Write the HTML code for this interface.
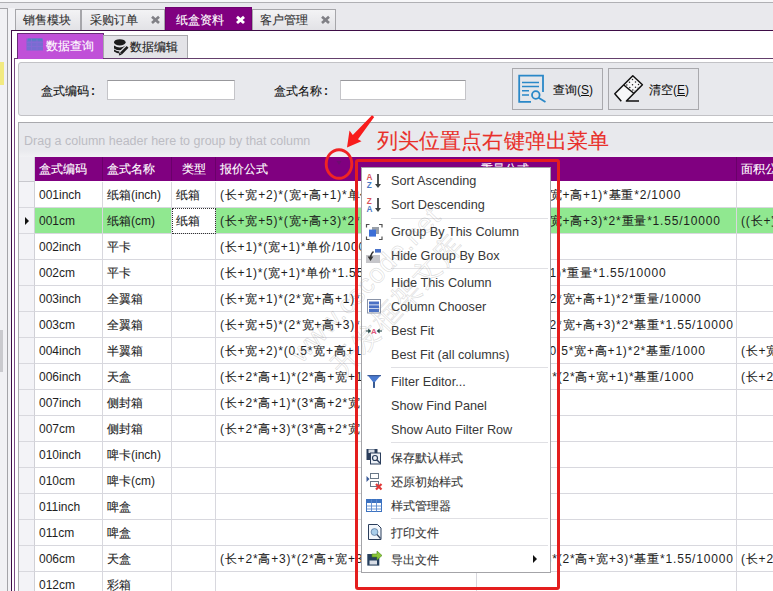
<!DOCTYPE html>
<html><head><meta charset="utf-8">
<style>
*{box-sizing:border-box}
html,body{margin:0;padding:0}
body{width:773px;height:591px;overflow:hidden;position:relative;background:#e9e9ed;font-family:"Liberation Sans",sans-serif;font-size:12px;color:#222}
.a{position:absolute}
.topline{left:0;top:0;width:773px;height:2px;background:#f7f7f9}
.topline2{left:0;top:2px;width:773px;height:1px;background:#b0b0b4}
.side{left:0;top:8px;width:8px;height:600px;background:#f1f1f4;border-top:1px solid #a4a4a8;border-right:1px solid #a4a4a8}
.gap{left:8px;top:8px;width:7px;height:600px;background:#f2f2f5}
.dtab{top:9px;height:21px;border:1px solid #a6a6aa;border-bottom:none;background:linear-gradient(#f3f3f5,#e2e2e6);color:#333;font-size:12px;line-height:19px}
.dtab .t{position:absolute;top:1px}
.dtab .x{position:absolute;top:0;font-weight:bold;color:#7c7c80;font-size:13px}
.dtab.act{top:7px;height:23px;background:#800080;border-color:#700070;color:#fff;line-height:23px}
.dtab.act .x{color:#fff}
.frame{left:11px;top:30px;width:800px;height:600px;border-left:1px solid #3e0c46;border-top:1px solid #3e0c46;background:#fff}
.itab{top:33px;height:26px;font-size:12px;line-height:24px}
.itab.act{left:17px;width:87px;background:#c050d8;border:1px solid #6a2a7a;border-bottom:none;color:#fff}
.itab.in{left:103px;top:35px;height:23px;width:85px;background:#e3e3e7;border:1px solid #a8a8ac;border-bottom:none;color:#222;line-height:22px}
.ipage{left:14px;top:58px;width:800px;height:600px;border-left:1px solid #7a4a84;border-top:1px solid #64406c;background:#fff}
.qpanel{left:18px;top:62px;width:800px;height:54px;background:#e8e9ed;border:1px solid #c2c2c6;border-radius:3px}
.lbl{top:83px;font-size:12px;color:#111;line-height:16px}
.inp{top:80px;height:20px;background:#fff;border:1px solid #c4c4c8;border-top-color:#98989c}
.btn{top:68px;height:42px;width:91px;border:1px solid #a9a9ad;background:#e6e7eb}
.btn .t{position:absolute;top:13px;font-size:12px;line-height:16px;color:#111}
.grid{left:18px;top:122px;width:800px;height:600px;border:1px solid #a9a9ad;background:#fff}
.gpanel{left:19px;top:123px;width:800px;height:34px;background:linear-gradient(#e8e9ed 0,#e8e9ed 78%,#f1f1f4 100%)}
.gtext{left:24px;top:134px;color:#bcbcc3;font-size:12.5px;line-height:14px}
.hdr{left:35px;top:157px;width:800px;height:24px;background:#800080}
.hind{left:19px;top:157px;width:16px;height:25px;background:#eeeef2;border-right:1px solid #d0d0d6;border-bottom:1px solid #c8c8ce}
.hc{position:absolute;top:157px;height:24px;color:#fff;line-height:24px;padding-left:4px;border-right:1px solid #6a006a;white-space:nowrap;overflow:hidden}
.row{position:absolute;left:19px;width:800px;height:26px}
.row .c{position:absolute;top:0;height:26px;line-height:27px;padding-left:4px;white-space:nowrap;overflow:hidden;border-right:1px solid #d8d8de;border-bottom:1px solid #d8d8de;color:#1e1e1e}
.row .c{margin-left:-19px}
.row.sel .c{background:#90e890}
.row .f{letter-spacing:0.8px}
.row.sel .c.focus{background:#fff;outline:1px dotted #333;outline-offset:-1px}
.ind{position:absolute;left:0;top:0;width:16px;height:26px;background:#f3f3f7;border-right:1px solid #d0d0d6;border-bottom:1px solid #d8d8de}
.tri{position:absolute;left:6px;top:9px;width:0;height:0;border-left:4px solid #111;border-top:4px solid transparent;border-bottom:4px solid transparent}
.menu{left:361px;top:167px;width:190px;height:406px;background:#fff;border:1px solid #a4a4a8}
.mi{position:absolute;left:391px;font-size:12.7px;line-height:14px;color:#383838;white-space:nowrap}
.sep{position:absolute;left:391px;width:157px;height:1px;background:#e0e0e4}
.red{left:355px;top:159px;width:205px;height:431px;border:3px solid #e41e1e;border-radius:3px}
.ann{left:377px;top:129px;color:#e8302a;font-size:21px;line-height:24px;letter-spacing:0.1px;white-space:nowrap}
.z{-webkit-text-stroke:0.12px currentColor}
.wm .z{-webkit-text-stroke:0.7px rgba(150,150,150,0.33)}
</style></head>
<body>
<div class="a topline"></div>
<div class="a topline2"></div>
<div class="a side"></div>
<div class="a" style="left:0;top:62px;width:4px;height:23px;background:#f2ea80"></div>
<div class="a" style="left:0;top:330px;width:3px;height:42px;background:#cacace"></div>
<div class="a gap"></div>

<div class="a frame"></div>

<div class="a dtab" style="left:15px;width:66px"><span class="t" style="left:7px"><span class="z">销售模块</span></span></div>
<div class="a dtab" style="left:81px;width:84px"><span class="t" style="left:8px"><span class="z">采购订单</span></span></div>
<div class="a dtab" style="left:252px;width:84px"><span class="t" style="left:7px"><span class="z">客户管理</span></span></div>
<div class="a dtab act" style="left:165px;width:87px"><span class="t" style="left:10px"><span class="z">纸盒资料</span></span></div>

<div class="a ipage"></div>
<div class="a itab act"><span class="a" style="left:28px;top:0"><span class="z">数据查询</span></span></div>
<div class="a itab in"><span class="a" style="left:26px;top:0"><span class="z">数据编辑</span></span></div>

<svg class="a" style="left:0;top:0" width="773" height="60" viewBox="0 0 773 60">
<g stroke-width="2.2" stroke-linecap="butt">
<path d="M152,16.8 L159,23 M159,16.8 L152,23" stroke="#808086" stroke-width="2.7"/>
<path d="M322,16.8 L329,23 M329,16.8 L322,23" stroke="#808086" stroke-width="2.7"/>
<path d="M237,16.8 L244,23 M244,16.8 L237,23" stroke="#fff" stroke-width="2.9"/>
</g>
<!-- grid icon -->
<rect x="26.5" y="38.5" width="16.5" height="12" fill="#6a72d0" opacity="0.85"/>
<rect x="28" y="38.5" width="14" height="2" fill="#3a90b8" opacity="0.7"/>
<path d="M26.5,42.5 H43 M26.5,46.5 H43 M31.5,38.5 V51 M37,38.5 V51" stroke="#8a6ad8" stroke-width="1" opacity="0.7"/>
<!-- db icon -->
<ellipse cx="119.8" cy="42.3" rx="5.8" ry="3.1" fill="#1c1c1c"/>
<path d="M114,45.6 Q119.8,49.4 125.6,45.6 V48.4 Q119.8,52.2 114,48.4 Z" fill="#1c1c1c"/>
<path d="M114,49.6 Q119.8,53.4 125.6,49.6 V51.6 Q119.8,55.4 114,51.6 Z" fill="#1c1c1c"/>
<path d="M128,46.5 L120.6,53.9" stroke="#e3e3e7" stroke-width="5.2"/>
<path d="M127.6,46.9 L121,53.5" stroke="#1c1c1c" stroke-width="2.6"/>
<path d="M118.8,55.6 L119.6,52.6 L121.8,54.8 Z" fill="#1c1c1c"/>
</svg>
<div class="a qpanel"></div>
<div class="a lbl" style="left:41px"><span class="z">盒式编码</span><span style="margin-left:2px;font-weight:bold">:</span></div>
<div class="a inp" style="left:107px;width:128px"></div>
<div class="a lbl" style="left:274px"><span class="z">盒式名称</span><span style="margin-left:2px;font-weight:bold">:</span></div>
<div class="a inp" style="left:340px;width:126px"></div>
<div class="a btn" style="left:512px"><span class="t" style="left:40px"><span class="z">查询</span>(<u>S</u>)</span></div>
<div class="a btn" style="left:608px"><span class="t" style="left:40px"><span class="z">清空</span>(<u>E</u>)</span></div>

<div class="a grid"></div>
<div class="a gpanel"></div>
<div class="a gtext">Drag a column header here to group by that column</div>
<div class="a hind"></div>
<div class="a hdr"></div>
<div class="hc" style="left:35px;width:68px"><span class="z">盒式编码</span></div>
<div class="hc" style="left:103px;width:69px"><span class="z">盒式名称</span></div>
<div class="hc" style="left:172px;width:44px;text-align:center;padding-left:0"><span class="z">类型</span></div>
<div class="hc" style="left:216px;width:261px;border-right:none"><span class="z">报价公式</span></div>
<div class="hc" style="left:477px;width:260px"><span class="z">重量公式</span></div>
<div class="hc" style="left:737px;width:100px"><span class="z">面积公式</span></div>

<div class="row" style="top:182px"><div class="ind"></div><div class="c" style="left:35px;width:68px">001inch</div><div class="c" style="left:103px;width:69px"><span class="z">纸箱</span>(inch)</div><div class="c" style="left:172px;width:44px"><span class="z">纸箱</span></div><div class="c f" style="left:216px;width:261px">(<span class="z">长</span>+<span class="z">宽</span>+2)*(<span class="z">宽</span>+<span class="z">高</span>+1)*<span class="z">单价</span>*2/1000</div><div class="c f" style="left:477px;width:260px">(<span class="z">长</span>+<span class="z">宽</span>+2)*(<span class="z">宽</span>+<span class="z">高</span>+1)*<span class="z">基重</span>*2/1000</div><div class="c f" style="left:737px;width:163px"></div></div>
<div class="row sel" style="top:208px"><div class="ind"><span class="tri"></span></div><div class="c" style="left:35px;width:68px">001cm</div><div class="c" style="left:103px;width:69px"><span class="z">纸箱</span>(cm)</div><div class="c focus" style="left:172px;width:44px"><span class="z">纸箱</span></div><div class="c f" style="left:216px;width:261px">(<span class="z">长</span>+<span class="z">宽</span>+5)*(<span class="z">宽</span>+<span class="z">高</span>+3)*2*<span class="z">单价</span>*1.55/10000</div><div class="c f" style="left:477px;width:260px">(<span class="z">长</span>+<span class="z">宽</span>+5)*(<span class="z">宽</span>+<span class="z">高</span>+3)*2*<span class="z">重量</span>*1.55/10000</div><div class="c f" style="left:737px;width:163px">((<span class="z">长</span>+<span class="z">宽</span>)*2</div></div>
<div class="row" style="top:234px"><div class="ind"></div><div class="c" style="left:35px;width:68px">002inch</div><div class="c" style="left:103px;width:69px"><span class="z">平卡</span></div><div class="c" style="left:172px;width:44px"></div><div class="c f" style="left:216px;width:261px">(<span class="z">长</span>+1)*(<span class="z">宽</span>+1)*<span class="z">单价</span>/1000</div><div class="c f" style="left:477px;width:260px"></div><div class="c f" style="left:737px;width:163px"></div></div>
<div class="row" style="top:260px"><div class="ind"></div><div class="c" style="left:35px;width:68px">002cm</div><div class="c" style="left:103px;width:69px"><span class="z">平卡</span></div><div class="c" style="left:172px;width:44px"></div><div class="c f" style="left:216px;width:261px">(<span class="z">长</span>+1)*(<span class="z">宽</span>+1)*<span class="z">单价</span>*1.55/10000</div><div class="c f" style="left:477px;width:260px">(<span class="z">长</span>+1)*(<span class="z">宽</span>+1)*<span class="z">重量</span>*1.55/10000</div><div class="c f" style="left:737px;width:163px"></div></div>
<div class="row" style="top:286px"><div class="ind"></div><div class="c" style="left:35px;width:68px">003inch</div><div class="c" style="left:103px;width:69px"><span class="z">全翼箱</span></div><div class="c" style="left:172px;width:44px"></div><div class="c f" style="left:216px;width:261px">(<span class="z">长</span>+<span class="z">宽</span>+1)*(2*<span class="z">宽</span>+<span class="z">高</span>+1)*2*<span class="z">单价</span>/1000</div><div class="c f" style="left:477px;width:260px">(<span class="z">长</span>+<span class="z">宽</span>+1)*(2*<span class="z">宽</span>+<span class="z">高</span>+1)*2*<span class="z">重量</span>/10000</div><div class="c f" style="left:737px;width:163px"></div></div>
<div class="row" style="top:312px"><div class="ind"></div><div class="c" style="left:35px;width:68px">003cm</div><div class="c" style="left:103px;width:69px"><span class="z">全翼箱</span></div><div class="c" style="left:172px;width:44px"></div><div class="c f" style="left:216px;width:261px">(<span class="z">长</span>+<span class="z">宽</span>+5)*(2*<span class="z">宽</span>+<span class="z">高</span>+3)*2*<span class="z">单价</span>/1000</div><div class="c f" style="left:477px;width:260px">(<span class="z">长</span>+<span class="z">宽</span>+5)*(2*<span class="z">宽</span>+<span class="z">高</span>+3)*2*<span class="z">基重</span>*1.55/10000</div><div class="c f" style="left:737px;width:163px"></div></div>
<div class="row" style="top:338px"><div class="ind"></div><div class="c" style="left:35px;width:68px">004inch</div><div class="c" style="left:103px;width:69px"><span class="z">半翼箱</span></div><div class="c" style="left:172px;width:44px"></div><div class="c f" style="left:216px;width:261px">(<span class="z">长</span>+<span class="z">宽</span>+2)*(0.5*<span class="z">宽</span>+<span class="z">高</span>+1)*2*<span class="z">单价</span></div><div class="c f" style="left:477px;width:260px">(<span class="z">长</span>+<span class="z">宽</span>+2)*(0.5*<span class="z">宽</span>+<span class="z">高</span>+1)*2*<span class="z">基重</span>/1000</div><div class="c f" style="left:737px;width:163px">(<span class="z">长</span>+<span class="z">宽</span></div></div>
<div class="row" style="top:364px"><div class="ind"></div><div class="c" style="left:35px;width:68px">006inch</div><div class="c" style="left:103px;width:69px"><span class="z">天盒</span></div><div class="c" style="left:172px;width:44px"></div><div class="c f" style="left:216px;width:261px">(<span class="z">长</span>+2*<span class="z">高</span>+1)*(2*<span class="z">高</span>+<span class="z">宽</span>+1)*<span class="z">单价</span></div><div class="c f" style="left:477px;width:260px">(<span class="z">长</span>+2*<span class="z">高</span>+1)*(2*<span class="z">高</span>+<span class="z">宽</span>+1)*<span class="z">基重</span>/1000</div><div class="c f" style="left:737px;width:163px">(<span class="z">长</span>+2</div></div>
<div class="row" style="top:390px"><div class="ind"></div><div class="c" style="left:35px;width:68px">007inch</div><div class="c" style="left:103px;width:69px"><span class="z">侧封箱</span></div><div class="c" style="left:172px;width:44px"></div><div class="c f" style="left:216px;width:261px">(<span class="z">长</span>+2*<span class="z">高</span>+1)*(3*<span class="z">高</span>+2*<span class="z">宽</span>+1)</div><div class="c f" style="left:477px;width:260px"></div><div class="c f" style="left:737px;width:163px"></div></div>
<div class="row" style="top:416px"><div class="ind"></div><div class="c" style="left:35px;width:68px">007cm</div><div class="c" style="left:103px;width:69px"><span class="z">侧封箱</span></div><div class="c" style="left:172px;width:44px"></div><div class="c f" style="left:216px;width:261px">(<span class="z">长</span>+2*<span class="z">高</span>+3)*(3*<span class="z">高</span>+2*<span class="z">宽</span>+3)</div><div class="c f" style="left:477px;width:260px"></div><div class="c f" style="left:737px;width:163px"></div></div>
<div class="row" style="top:442px"><div class="ind"></div><div class="c" style="left:35px;width:68px">010inch</div><div class="c" style="left:103px;width:69px"><span class="z">啤卡</span>(inch)</div><div class="c" style="left:172px;width:44px"></div><div class="c f" style="left:216px;width:261px"></div><div class="c f" style="left:477px;width:260px"></div><div class="c f" style="left:737px;width:163px"></div></div>
<div class="row" style="top:468px"><div class="ind"></div><div class="c" style="left:35px;width:68px">010cm</div><div class="c" style="left:103px;width:69px"><span class="z">啤卡</span>(cm)</div><div class="c" style="left:172px;width:44px"></div><div class="c f" style="left:216px;width:261px"></div><div class="c f" style="left:477px;width:260px"></div><div class="c f" style="left:737px;width:163px"></div></div>
<div class="row" style="top:494px"><div class="ind"></div><div class="c" style="left:35px;width:68px">011inch</div><div class="c" style="left:103px;width:69px"><span class="z">啤盒</span></div><div class="c" style="left:172px;width:44px"></div><div class="c f" style="left:216px;width:261px"></div><div class="c f" style="left:477px;width:260px"></div><div class="c f" style="left:737px;width:163px"></div></div>
<div class="row" style="top:520px"><div class="ind"></div><div class="c" style="left:35px;width:68px">011cm</div><div class="c" style="left:103px;width:69px"><span class="z">啤盒</span></div><div class="c" style="left:172px;width:44px"></div><div class="c f" style="left:216px;width:261px"></div><div class="c f" style="left:477px;width:260px"></div><div class="c f" style="left:737px;width:163px"></div></div>
<div class="row" style="top:546px"><div class="ind"></div><div class="c" style="left:35px;width:68px">006cm</div><div class="c" style="left:103px;width:69px"><span class="z">天盒</span></div><div class="c" style="left:172px;width:44px"></div><div class="c f" style="left:216px;width:261px">(<span class="z">长</span>+2*<span class="z">高</span>+3)*(2*<span class="z">高</span>+<span class="z">宽</span>+3)*<span class="z">单价</span></div><div class="c f" style="left:477px;width:260px">(<span class="z">长</span>+2*<span class="z">高</span>+3)*(2*<span class="z">高</span>+<span class="z">宽</span>+3)*<span class="z">基重</span>*1.55/10000</div><div class="c f" style="left:737px;width:163px">(<span class="z">长</span>+2</div></div>
<div class="row" style="top:572px"><div class="ind"></div><div class="c" style="left:35px;width:68px">012cm</div><div class="c" style="left:103px;width:69px"><span class="z">彩箱</span></div><div class="c" style="left:172px;width:44px"></div><div class="c f" style="left:216px;width:261px"></div><div class="c f" style="left:477px;width:260px"></div><div class="c f" style="left:737px;width:163px"></div></div>

<div class="a menu"></div>
<div class="mi" style="top:174px">Sort Ascending</div>
<div class="mi" style="top:198px">Sort Descending</div>
<div class="sep" style="top:218px"></div>
<div class="mi" style="top:225px">Group By This Column</div>
<div class="mi" style="top:249px">Hide Group By Box</div>
<div class="sep" style="top:268px"></div>
<div class="mi" style="top:276px">Hide This Column</div>
<div class="mi" style="top:300px">Column Chooser</div>
<div class="mi" style="top:324px">Best Fit</div>
<div class="mi" style="top:348px">Best Fit (all columns)</div>
<div class="sep" style="top:367px"></div>
<div class="mi" style="top:375px">Filter Editor...</div>
<div class="mi" style="top:399px">Show Find Panel</div>
<div class="mi" style="top:423px">Show Auto Filter Row</div>
<div class="sep" style="top:442px"></div>
<div class="mi" style="top:451px;font-size:12px"><span class="z">保存默认样式</span></div>
<div class="mi" style="top:475px;font-size:12px"><span class="z">还原初始样式</span></div>
<div class="mi" style="top:499px;font-size:12px"><span class="z">样式管理器</span></div>
<div class="sep" style="top:518px"></div>
<div class="mi" style="top:526px;font-size:12px"><span class="z">打印文件</span></div>
<div class="sep" style="top:545px"></div>
<div class="mi" style="top:553px;font-size:12px"><span class="z">导出文件</span></div>
<div class="a" style="left:533px;top:555px;width:0;height:0;border-left:4px solid #111;border-top:4px solid transparent;border-bottom:4px solid transparent"></div>

<svg class="a" style="left:0;top:0" width="773" height="591" viewBox="0 0 773 591">
<!-- sort asc -->
<g font-family="Liberation Sans" font-weight="bold" font-size="8.2">
<text x="366.6" y="180.2" fill="#d9545a">A</text>
<text x="366.8" y="188.2" fill="#4b7ac4">Z</text>
<text x="366.8" y="204.2" fill="#d9545a">Z</text>
<text x="366.6" y="212.2" fill="#4b7ac4">A</text>
</g>
<path d="M378,174 V185" stroke="#3b4242" stroke-width="1.8"/><path d="M375,184 L378,188 L381,184 Z" fill="#3b4242"/>
<path d="M378,198 V209" stroke="#3b4242" stroke-width="1.8"/><path d="M375,208 L378,212 L381,208 Z" fill="#3b4242"/>
<!-- group by -->
<path d="M366.5,227.5 V224.5 H369.5 M379,224.5 H382 V227.5 M382,236.5 V239.5 H379 M369.5,239.5 H366.5 V236.5" stroke="#505050" stroke-width="1.2" fill="none"/>
<rect x="372" y="227" width="7" height="7" fill="#9aa0a8"/>
<rect x="369" y="229.6" width="7" height="7" fill="#3d6fd6"/>
<!-- hide group box -->
<rect x="366" y="255" width="14" height="8" fill="#c6c6ca"/>
<rect x="375" y="249" width="6" height="3.6" fill="#4a72c8"/>
<path d="M373.5,251.5 Q370.5,254 370.5,258.5" stroke="#333" stroke-width="1.6" fill="none"/>
<path d="M367.6,256.5 L370.5,261 L373.4,256.5 Z" fill="#333"/>
<!-- column chooser -->
<rect x="367.5" y="299.5" width="13" height="13.5" fill="#fff" stroke="#8a94a8" stroke-width="1"/>
<rect x="369" y="301.5" width="10" height="3" fill="#4a70c4"/>
<rect x="369" y="305.3" width="10" height="3" fill="#4a70c4"/>
<rect x="369" y="309" width="10" height="3" fill="#4a70c4"/>
<!-- best fit -->
<path d="M365.8,331 H369" stroke="#264a4a" stroke-width="1.1"/><path d="M368.2,328.6 L371.2,331 L368.2,333.4 Z" fill="#264a4a"/><path d="M382,331 H378.8" stroke="#264a4a" stroke-width="1.1"/><path d="M379.6,328.6 L376.6,331 L379.6,333.4 Z" fill="#264a4a"/>
<text x="370.9" y="334" font-family="Liberation Sans" font-weight="bold" font-size="8" fill="#e05a7c">A</text>
<!-- filter -->
<path d="M367.5,375 H381 L375,382 V387.7 H373 V382 Z" fill="#4a7ad0"/>
<rect x="367.5" y="375" width="13.5" height="1.2" fill="#3a5a98"/>
<path d="M373,382 H375 V387.7 H373 Z" fill="#3a5a90"/>
<!-- save default -->
<rect x="366.5" y="449" width="11" height="11" fill="#2b3e5c"/>
<rect x="368.5" y="449.5" width="6" height="3.5" fill="#d8dde6"/>
<rect x="370.5" y="453" width="10" height="11" fill="#eef2f8" stroke="#2b3e5c" stroke-width="1"/>
<circle cx="375" cy="458" r="2.5" fill="none" stroke="#2b3e5c" stroke-width="1.2"/>
<path d="M376.8,459.8 L380,463" stroke="#2b3e5c" stroke-width="1.5"/>
<!-- restore -->
<path d="M366.5,476 L369.5,479 L366.5,482 Z" fill="#3a5a98"/>
<rect x="370.5" y="473.5" width="8" height="5" fill="#fff" stroke="#6a7888" stroke-width="1"/>
<rect x="370.5" y="481.5" width="8" height="5" fill="#fff" stroke="#6a7888" stroke-width="1"/>
<path d="M376,484 L381.5,489.5 M381.5,484 L376,489.5" stroke="#e03838" stroke-width="2.2"/>
<!-- style manager -->
<rect x="366.5" y="499.5" width="15" height="12" fill="#fff" stroke="#3d72c0" stroke-width="1"/>
<rect x="366.5" y="499.5" width="15" height="3.5" fill="#3d72c0"/>
<path d="M371.5,499.5 V511.5 M376.5,499.5 V511.5 M366.5,506 H381.5 M366.5,509 H381.5" stroke="#5a8ad0" stroke-width="0.9"/>
<!-- print -->
<path d="M368.5,524.5 H377.5 L381,528 V539.5 H368.5 Z" fill="#f2f6fb" stroke="#2b3e5c" stroke-width="1"/>
<circle cx="374.5" cy="532" r="3.4" fill="#a8cdea" stroke="#5a7aa0" stroke-width="0.8"/>
<path d="M377,534.5 L380.5,538.5" stroke="#2b3e5c" stroke-width="1.2"/>
<!-- export -->
<rect x="367.3" y="554" width="12" height="11.6" fill="#27405e"/>
<rect x="369.5" y="560.5" width="7.5" height="4" fill="#d8dde6"/>
<path d="M372,554 H377 V551 L382,555.5 L377,560 V557 H372 Z" fill="#8cc63a" stroke="#4a8a1a" stroke-width="0.6"/>

<!-- query button icon -->
<g stroke="#2a88c8" fill="none">
<path d="M531,101.8 H519.2 V75.6 H543 V92" stroke-width="1.8"/>
<path d="M522,82.5 H539 M522,86.5 H539 M522,90.8 H529 M522,95 H529" stroke-width="1.5"/>
<circle cx="535.8" cy="95" r="3.8" stroke-width="1.8"/>
<path d="M538.6,97.8 L545.5,102" stroke-width="1.8"/>
</g>
<!-- eraser -->
<path d="M621.3,101.3 L614.8,93.8 L632.8,75.8 L642.4,84.8 L626.4,101 Z" fill="#f7f7f8"/>
<g stroke="#111" stroke-width="1.5" fill="none" stroke-linejoin="round">
<path d="M621.3,101.3 L614.8,93.8 L632.8,75.8 L642.4,84.8 L626.4,101 H639"/>
<path d="M623.8,85 L634,93.5"/>
</g>
<g fill="#222">
<circle cx="632.5" cy="79.5" r=".75"/><circle cx="635.5" cy="82" r=".75"/><circle cx="638.5" cy="84.5" r=".75"/>
<circle cx="629.5" cy="82.3" r=".75"/><circle cx="632.5" cy="84.8" r=".75"/><circle cx="635.5" cy="87.3" r=".75"/><circle cx="638" cy="88" r=".6"/>
<circle cx="626.8" cy="85" r=".75"/><circle cx="629.8" cy="87.5" r=".75"/><circle cx="632.8" cy="90" r=".75"/><circle cx="635" cy="91" r=".6"/>
</g>
</svg>
<div class="a" style="left:306px;top:338px;font-size:27px;line-height:30px;white-space:nowrap;color:rgba(255,255,255,0);-webkit-text-stroke:0.7px rgba(150,150,150,0.33);transform:rotate(-46deg);transform-origin:0 100%;letter-spacing:0.5px">www.cscode.net</div>
<div class="a wm" style="left:347px;top:351px;font-size:28px;line-height:30px;white-space:nowrap;color:rgba(255,255,255,0);-webkit-text-stroke:0.7px rgba(150,150,150,0.33);transform:rotate(-47deg);transform-origin:0 100%;letter-spacing:2px"><span class="z">开发框架文库</span></div>
<div class="a red"></div>
<svg class="a" style="left:0;top:0" width="773" height="591" viewBox="0 0 773 591">
<polygon points="347,147.5 349.5,130.5 352.8,135 372,115.3 374.2,117 358,139.2 361.5,141.3" fill="#f81c1c"/>
<ellipse cx="339" cy="164" rx="12.8" ry="14.3" fill="none" stroke="#f02424" stroke-width="2.9"/><path d="M336.5,161 L339,165 L341.5,161 Z" fill="#5a1a60" opacity="0.5"/>
</svg>
<div class="a ann"><span class="z">列头位置点右键弹出菜单</span></div>
</body></html>
